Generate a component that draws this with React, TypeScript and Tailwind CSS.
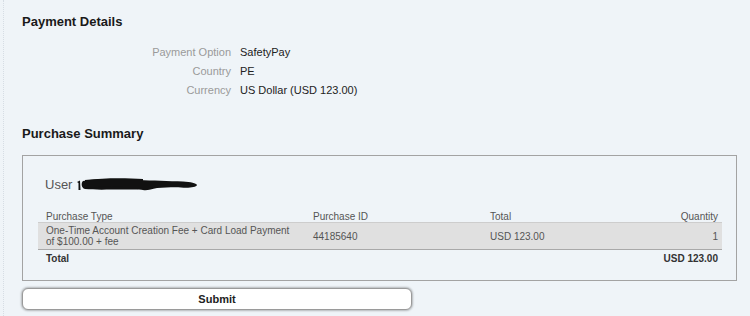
import React from "react";

function Redaction() {
  return (
    <svg width="122" height="16" viewBox="0 0 122 16" className="inline-block align-middle ml-[5px]">
      <path d="M0 5 L3 3.5 L3.5 13 L1.5 13 L1.5 6 Z" fill="#111" />
      <path
        d="M6 4 C20 1.5, 40 1.5, 62 3 C75 3.5, 92 4, 106 4.5 C114 5, 119 6, 120 8 C119 10.5, 112 11, 104 10.5 C95 10, 88 11, 80 11 C74 12, 70 14, 66 13 C62 12, 55 12.5, 45 12.5 C30 12.5, 18 13, 8 12 C4 11, 4 5.5, 6 4 Z"
        fill="#111"
      />
      <path d="M8 3 C30 0.5, 50 1, 66 2 L66 9 C50 9, 30 9, 8 11 Z" fill="#111" />
    </svg>
  );
}

export default function App() {
  return (
    <div className="relative w-[750px] h-[316px] overflow-hidden bg-[#eff4f8] font-['Liberation_Sans',Arial,sans-serif] text-[#222]">
      <div className="absolute left-[3px] top-0 bottom-0 border-l border-dotted border-[#d6dde4]" />
      <div className="pl-[22px] pt-[14px]">
        <h2 className="text-[13px] leading-[16px] font-bold text-[#1a1a1a]">Payment Details</h2>
        <div className="mt-[13px] grid grid-cols-[209px_1fr] gap-x-[9px] text-[11px] leading-[19px]">
          <div className="text-right text-[#9a9a9a]">Payment Option</div>
          <div className="text-[#222]">SafetyPay</div>
          <div className="text-right text-[#9a9a9a]">Country</div>
          <div className="text-[#222]">PE</div>
          <div className="text-right text-[#9a9a9a]">Currency</div>
          <div className="text-[#222]">US Dollar (USD 123.00)</div>
        </div>
        <h2 className="mt-[26px] text-[13px] leading-[16px] font-bold text-[#1a1a1a]">Purchase Summary</h2>
        <div className="mt-[13px] w-[715px] h-[126px] border border-[#a3a3a3] pt-[21px] pl-[15px] pr-[14px]">
          <div className="flex items-center h-[16px] text-[13px] text-[#555] pl-[7px]">
            <span>User</span>
            <Redaction />
          </div>
          <div className="mt-[16px] text-[10px] text-[#555]">
            <div className="grid grid-cols-[267px_177px_1fr_80px] h-[13px] items-center">
              <div className="pl-[8px]">Purchase Type</div>
              <div className="pl-[8px]">Purchase ID</div>
              <div className="pl-[8px]">Total</div>
              <div className="text-right pr-[4px]">Quantity</div>
            </div>
            <div className="grid grid-cols-[267px_177px_1fr_80px] h-[28px] items-center bg-[#e0e0e0] border-t border-t-[#cdcdcd] border-b border-b-[#a9a9a9] leading-[11px]">
              <div className="pl-[8px]">
                One-Time Account Creation Fee + Card Load Payment
                <br />
                of $100.00 + fee
              </div>
              <div className="pl-[8px]">44185640</div>
              <div className="pl-[8px]">USD 123.00</div>
              <div className="text-right pr-[4px]">1</div>
            </div>
            <div className="flex justify-between items-center h-[16px] font-bold text-[#333]">
              <div className="pl-[8px]">Total</div>
              <div className="pr-[4px]">USD 123.00</div>
            </div>
          </div>
        </div>
        <button className="mt-[7px] w-[390px] h-[22px] rounded-[6px] bg-white border border-[#9a9a9a] shadow-[0_0_2px_1px_rgba(0,0,0,0.25)] text-[11px] font-bold text-[#222] flex items-center justify-center">
          Submit
        </button>
      </div>
    </div>
  );
}
